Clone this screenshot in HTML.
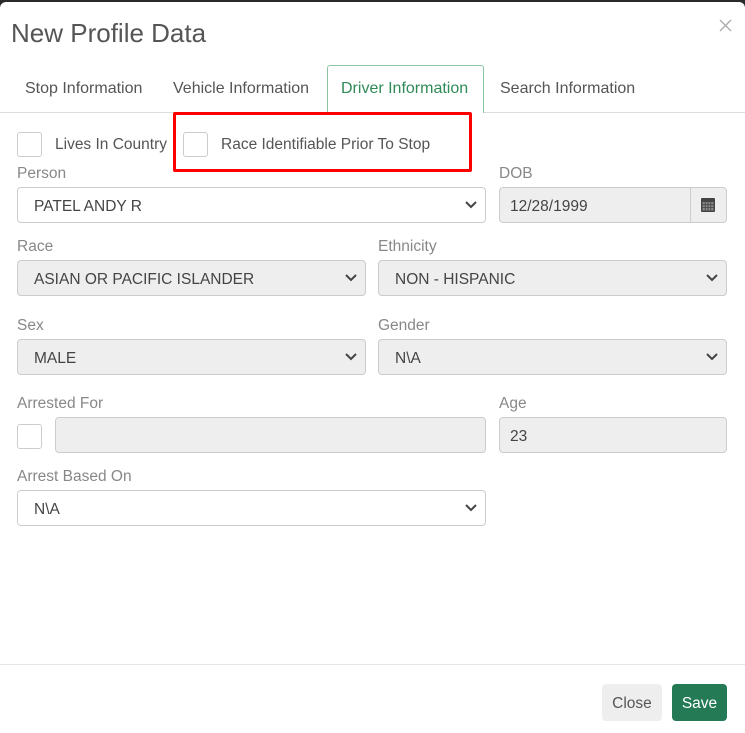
<!DOCTYPE html>
<html><head><meta charset="utf-8"><style>
*{box-sizing:border-box;margin:0;padding:0}
body{width:745px;height:733px;background:#2a2a2a;font-family:"Liberation Sans",sans-serif;overflow:hidden;position:relative}
.modal{position:absolute;left:0;top:2px;width:745px;height:731px;background:#fff;border-radius:6px 6px 0 0}
.a{position:absolute}
.t{font-size:15.5px;color:#555;white-space:nowrap}
.tab{font-size:16px;color:#555;white-space:nowrap}
.lbl{font-size:15.5px;color:#888;white-space:nowrap}
.cb{width:25px;height:25px;border:1px solid #ccc;border-radius:3px;background:#fff}
.in{border:1px solid #ccc;border-radius:4px;height:36px;font-size:15.5px;color:#444;padding:2px 0 0 16px;line-height:34px;white-space:nowrap}
.g{background:#eee}
.chev{position:absolute;right:8px;top:12px}
</style></head><body>
<div class="modal">
<div class="a" style="left:11px;top:16px;font-size:26px;color:#555">New Profile Data</div>
<svg class="a" style="left:719px;top:17px" width="13" height="13"><path d="M1 1L12 12M12 1L1 12" stroke="#aaa" stroke-width="1.3"/></svg>
<div class="a" style="left:0;top:110px;width:745px;height:1px;background:#ddd"></div>
<div class="a" style="left:327px;top:63px;width:157px;height:48px;border:1px solid #8cc5a5;border-bottom:none;background:#fff;border-radius:3px 3px 0 0"></div>
<div class="a tab" style="left:25px;top:78px">Stop Information</div>
<div class="a tab" style="left:173px;top:78px">Vehicle Information</div>
<div class="a tab" style="left:341px;top:78px;color:#2e8b57">Driver Information</div>
<div class="a tab" style="left:500px;top:78px">Search Information</div>

<div class="a cb" style="left:17px;top:130px"></div>
<div class="a t" style="left:55px;top:134px">Lives In Country</div>
<div class="a" style="left:173px;top:110px;width:299px;height:60px;border:3px solid #f00;border-radius:2px"></div>
<div class="a cb" style="left:183px;top:130px"></div>
<div class="a t" style="left:221px;top:134px">Race Identifiable Prior To Stop</div>

<div class="a lbl" style="left:17px;top:163px">Person</div>
<div class="a in" style="left:17px;top:185px;width:469px">PATEL ANDY R<svg class="chev" width="12" height="10"><path d="M1 2L6 7L11 2" stroke="#444" stroke-width="2" fill="none"/></svg></div>
<div class="a lbl" style="left:499px;top:163px">DOB</div>
<div class="a in g" style="left:499px;top:185px;width:228px;padding-left:10px">12/28/1999</div>
<div class="a" style="left:690px;top:185px;width:1px;height:36px;background:#ccc"></div>
<svg class="a" style="left:701px;top:195px" width="14" height="15"><rect x="0" y="1" width="14" height="14" rx="1" fill="#444"/><rect x="1.5" y="5" width="11" height="8.5" fill="#888"/><path d="M1.5 7.7H12.5M1.5 10.5H12.5M4.2 5V13.5M7 5V13.5M9.8 5V13.5" stroke="#444" stroke-width="0.8"/></svg>

<div class="a lbl" style="left:17px;top:236px">Race</div>
<div class="a in g" style="left:17px;top:258px;width:349px">ASIAN OR PACIFIC ISLANDER<svg class="chev" width="12" height="10"><path d="M1 2L6 7L11 2" stroke="#444" stroke-width="2" fill="none"/></svg></div>
<div class="a lbl" style="left:378px;top:236px">Ethnicity</div>
<div class="a in g" style="left:378px;top:258px;width:349px">NON - HISPANIC<svg class="chev" width="12" height="10"><path d="M1 2L6 7L11 2" stroke="#444" stroke-width="2" fill="none"/></svg></div>

<div class="a lbl" style="left:17px;top:315px">Sex</div>
<div class="a in g" style="left:17px;top:337px;width:349px">MALE<svg class="chev" width="12" height="10"><path d="M1 2L6 7L11 2" stroke="#444" stroke-width="2" fill="none"/></svg></div>
<div class="a lbl" style="left:378px;top:315px">Gender</div>
<div class="a in g" style="left:378px;top:337px;width:349px">N\A<svg class="chev" width="12" height="10"><path d="M1 2L6 7L11 2" stroke="#444" stroke-width="2" fill="none"/></svg></div>

<div class="a lbl" style="left:17px;top:393px">Arrested For</div>
<div class="a cb" style="left:17px;top:422px"></div>
<div class="a in g" style="left:55px;top:415px;width:431px"></div>
<div class="a lbl" style="left:499px;top:393px">Age</div>
<div class="a in g" style="left:499px;top:415px;width:228px;padding-left:10px">23</div>

<div class="a lbl" style="left:17px;top:466px">Arrest Based On</div>
<div class="a in" style="left:17px;top:488px;width:469px">N\A<svg class="chev" width="12" height="10"><path d="M1 2L6 7L11 2" stroke="#444" stroke-width="2" fill="none"/></svg></div>

<div class="a" style="left:0;top:662px;width:745px;height:1px;background:#e5e5e5"></div>
<div class="a" style="left:602px;top:682px;width:60px;height:37px;background:#eee;border-radius:4px;font-size:15.5px;color:#555;text-align:center;line-height:39px">Close</div>
<div class="a" style="left:672px;top:682px;width:55px;height:37px;background:#237a55;border-radius:4px;font-size:15.5px;color:#fff;text-align:center;line-height:39px">Save</div>
</div>
</body></html>
